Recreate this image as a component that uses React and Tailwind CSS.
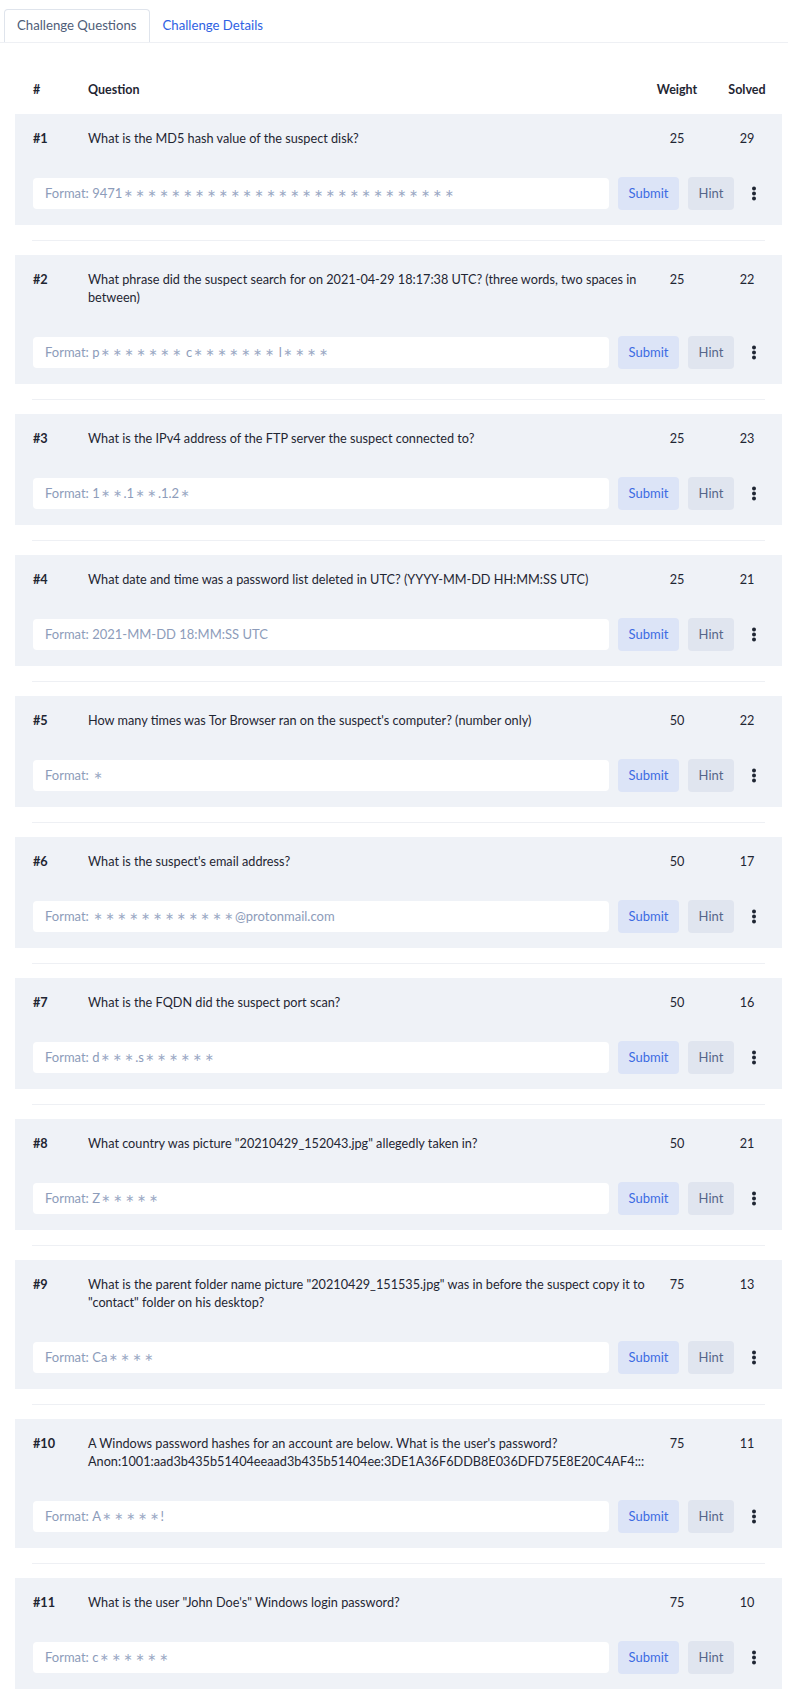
import React from "react";

const questions = [
  { n: 1, q: "What is the MD5 hash value of the suspect disk?", w: 25, s: 29, f: [["9471", 28]] },
  { n: 2, q: "What phrase did the suspect search for on 2021-04-29 18:17:38 UTC? (three words, two spaces in between)", w: 25, s: 22, f: [["p", 7], [" c", 7], [" l", 4]] },
  { n: 3, q: "What is the IPv4 address of the FTP server the suspect connected to?", w: 25, s: 23, f: [["1", 2], [".1", 2], [".1.2", 1]] },
  { n: 4, q: "What date and time was a password list deleted in UTC? (YYYY-MM-DD HH:MM:SS UTC)", w: 25, s: 21, f: [["2021-MM-DD 18:MM:SS UTC", 0]] },
  { n: 5, q: "How many times was Tor Browser ran on the suspect's computer? (number only)", w: 50, s: 22, f: [["", 1]] },
  { n: 6, q: "What is the suspect's email address?", w: 50, s: 17, f: [["", 12], ["@protonmail.com", 0]] },
  { n: 7, q: "What is the FQDN did the suspect port scan?", w: 50, s: 16, f: [["d", 3], [".s", 6]] },
  { n: 8, q: "What country was picture \"20210429_152043.jpg\" allegedly taken in?", w: 50, s: 21, f: [["Z", 5]] },
  { n: 9, q: "What is the parent folder name picture \"20210429_151535.jpg\" was in before the suspect copy it to \"contact\" folder on his desktop?", w: 75, s: 13, f: [["Ca", 4]] },
  { n: 10, q: "A Windows password hashes for an account are below. What is the user's password? Anon:1001:aad3b435b51404eeaad3b435b51404ee:3DE1A36F6DDB8E036DFD75E8E20C4AF4:::", w: 75, s: 11, f: [["A", 5], ["!", 0]] },
  { n: 11, q: "What is the user \"John Doe's\" Windows login password?", w: 75, s: 10, f: [["c", 6]] },
];

function Stars({ count }) {
  if (!count) return null;
  return (
    <span className="inline-flex items-center">
      {Array.from({ length: count }).map((_, i) => (
        <span
          key={i}
          className="inline-block w-[11.9px] text-center font-['DejaVu_Sans',sans-serif] text-[11px] leading-none text-[#9aa8c4]"
        >
          ∗
        </span>
      ))}
    </span>
  );
}

function Kebab() {
  return (
    <svg width="6" height="15" viewBox="0 0 6 15" aria-hidden="true">
      <circle cx="3" cy="2.5" r="2" fill="#1f2633" />
      <circle cx="3" cy="7.5" r="2" fill="#1f2633" />
      <circle cx="3" cy="12.5" r="2" fill="#1f2633" />
    </svg>
  );
}

function Row({ item }) {
  return (
    <div className="bg-[#eff2f7]">
      <div className="flex pl-[18px] pr-[15px] pt-[15px] leading-[18px] text-[12.7px] text-[#1f2633]">
        <div className="w-[55px] shrink-0 font-bold">#{item.n}</div>
        <div className="flex-1 min-w-0 break-words">{item.q}</div>
        <div className="w-[40px] shrink-0 flex justify-center">{item.w}</div>
        <div className="w-[30px] shrink-0" />
        <div className="w-[40px] shrink-0 flex justify-center">{item.s}</div>
      </div>
      <div className="flex items-center gap-[9px] pl-[18px] pr-[17px] mt-[30px] pb-[15px]">
        <div
          className="flex-1 h-[31px] bg-white rounded-[4px] px-[12px] flex items-center text-[13px] text-[#8d9cba] whitespace-pre"
          role="textbox"
          aria-label={`Answer for question ${item.n}`}
        >
          <span>Format: </span>
          {item.f.map(([t, c], i) => (
            <React.Fragment key={i}>
              {t && <span>{t}</span>}
              <Stars count={c} />
            </React.Fragment>
          ))}
        </div>
        <button className="w-[61px] h-[33px] rounded-[4px] bg-[#dce4f7] text-[#3d6be3] text-[13px]">
          Submit
        </button>
        <button className="w-[46px] h-[33px] rounded-[4px] bg-[#e0e5ef] text-[#56668a] text-[13px]">
          Hint
        </button>
        <div className="w-[22px] flex justify-center">
          <Kebab />
        </div>
      </div>
    </div>
  );
}

export default function App() {
  return (
    <div className="min-h-screen bg-white font-['Lato','Liberation_Sans',sans-serif] text-[#1f2633]">
      <div className="flex pl-[4px] pt-[9px] border-b border-[#eef0f4]">
        <div className="h-[33px] -mb-px px-[12px] flex items-center border border-b-0 border-[#dfe4ec] rounded-t-[4px] bg-white text-[13.2px] text-[#4f5d78]">
          Challenge Questions
        </div>
        <div className="h-[33px] px-[13px] flex items-center text-[13.2px] text-[#2f62e3]">
          Challenge Details
        </div>
      </div>
      <div className="pl-[15px] pr-[6px]">
        <div className="flex pl-[18px] pr-[15px] pt-[37px] pb-[15px] leading-[19px] text-[12.5px] font-bold text-[#1f2633]">
          <div className="w-[55px] shrink-0">#</div>
          <div className="flex-1">Question</div>
          <div className="w-[40px] shrink-0 flex justify-center whitespace-nowrap">Weight</div>
          <div className="w-[30px] shrink-0" />
          <div className="w-[40px] shrink-0 flex justify-center whitespace-nowrap">Solved</div>
        </div>
        {questions.map((item, i) => (
          <React.Fragment key={item.n}>
            {i > 0 && <div className="mx-[17px] my-[14.5px] h-px bg-[#eef0f4]" />}
            <Row item={item} />
          </React.Fragment>
        ))}
      </div>
    </div>
  );
}
